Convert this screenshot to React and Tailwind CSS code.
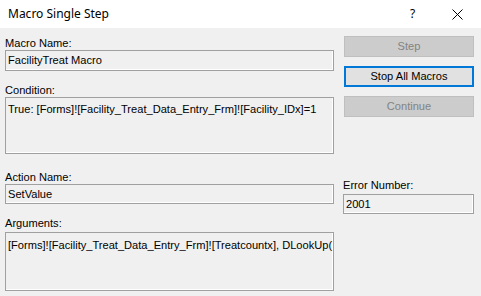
function Field({ value, h, mt = "mt-0" }) {
  return (
    <div
      className={`${h} ${mt} border border-[#a0a0a0] bg-[#f0f0f0] shadow-[inset_-1px_-1px_0_#ffffff] pl-[2px] overflow-hidden whitespace-nowrap`}
    >
      {value}
    </div>
  );
}

function Btn({ children, active = false, disabled = false }) {
  if (active) {
    return (
      <div className="h-[21px] w-[130px] border-2 border-[#0078d7] bg-[#e1e1e1] text-black flex items-center justify-center leading-none">
        {children}
      </div>
    );
  }
  return (
    <div
      className={`h-[21px] w-[130px] border border-[#bfbfbf] bg-[#cccccc] flex items-center justify-center leading-none ${
        disabled ? "text-[#838383]" : "text-black"
      }`}
    >
      {children}
    </div>
  );
}

export default function App() {
  return (
    <div className="w-[481px] h-[296px] bg-[#f0f0f0] text-black text-[11.1px] font-['Liberation_Sans',sans-serif] overflow-hidden">
      {/* TITLE BAR */}
      <div className="h-[28px] bg-white flex items-center">
        <div className="pl-[8px] text-[12px] font-['Noto_Sans',sans-serif] flex-1">
          Macro Single Step
        </div>
        <div className="w-[12px] text-[12px] font-['Noto_Sans',sans-serif] mr-[30px]">?</div>
        <svg width="11" height="11" viewBox="0 0 11 11" className="mr-[18px]">
          <path d="M0.5 0.5 L10.5 10.5 M10.5 0.5 L0.5 10.5" stroke="#000" strokeWidth="1" fill="none" />
        </svg>
      </div>

      {/* BODY */}
      <div className="flex pl-[5px] pt-[8px]">
        {/* LEFT */}
        <div className="w-[329px] flex flex-col">
          <div className="h-[14px] leading-[14px]">Macro Name:</div>
          <Field h="h-[21px] leading-[19px]" value="FacilityTreat Macro" />

          <div className="h-[14px] leading-[14px] mt-[12px]">Condition:</div>
          <Field
            h="h-[57px] leading-[19px] pt-[2px]"
            value="True: [Forms]![Facility_Treat_Data_Entry_Frm]![Facility_IDx]=1"
          />

          <div className="h-[14px] leading-[14px] mt-[16px]">Action Name:</div>
          <Field h="h-[20px] leading-[18px]" value="SetValue" />

          <div className="h-[14px] leading-[14px] mt-[12px]">Arguments:</div>
          <Field
            h="h-[59px] leading-[19px] pt-[3px]"
            mt="mt-[2px]"
            value="[Forms]![Facility_Treat_Data_Entry_Frm]![Treatcountx], DLookUp("
          />
        </div>

        {/* RIGHT */}
        <div className="ml-[9px] flex flex-col">
          <div className="ml-px flex flex-col gap-[9px]">
            <Btn disabled>Step</Btn>
            <Btn active>Stop All Macros</Btn>
            <Btn disabled>Continue</Btn>
          </div>

          <div className="h-[14px] leading-[14px] mt-[61px]">Error Number:</div>
          <div className="w-[131px] mt-[2px]">
            <Field h="h-[20px] leading-[18px]" value="2001" />
          </div>
        </div>
      </div>
    </div>
  );
}
